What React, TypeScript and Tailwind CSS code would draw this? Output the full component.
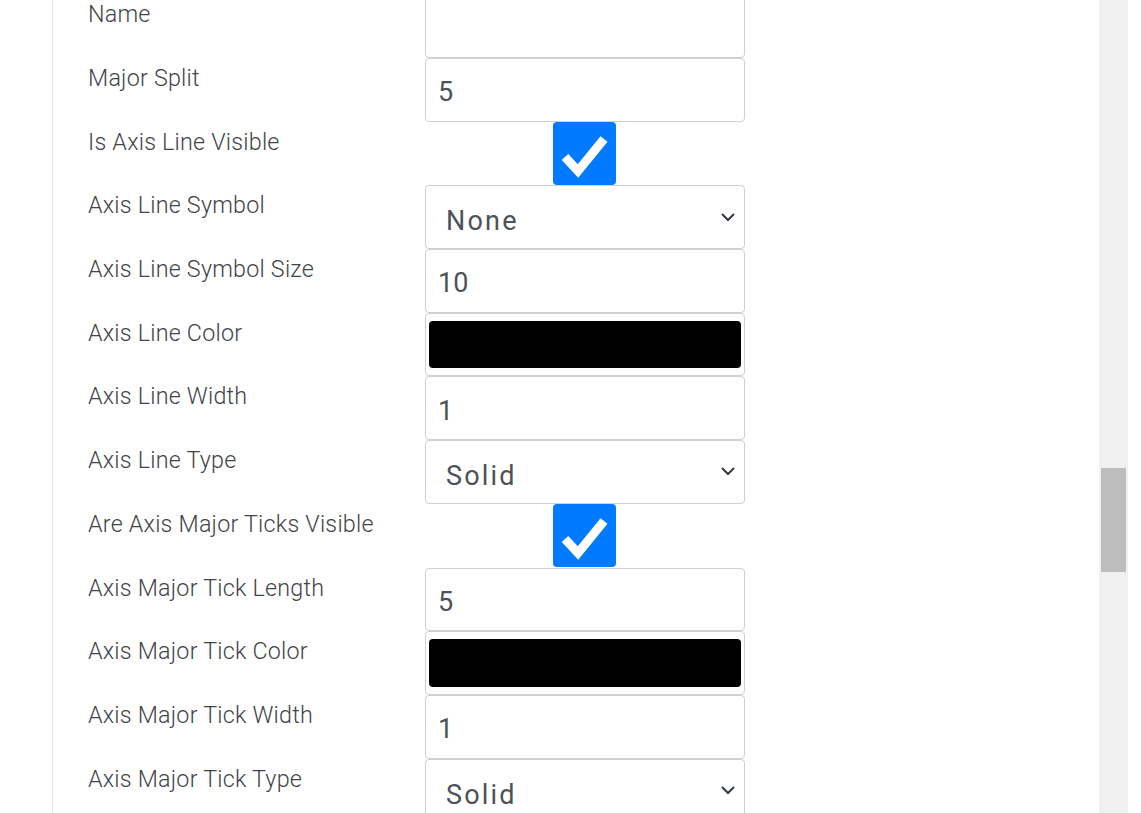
import React from "react";

type Row =
  | { label: string; kind: "text"; value: string }
  | { label: string; kind: "check" }
  | { label: string; kind: "select"; value: string }
  | { label: string; kind: "color" };

const rows: Row[] = [
  { label: "Name", kind: "text", value: "" },
  { label: "Major Split", kind: "text", value: "5" },
  { label: "Is Axis Line Visible", kind: "check" },
  { label: "Axis Line Symbol", kind: "select", value: "None" },
  { label: "Axis Line Symbol Size", kind: "text", value: "10" },
  { label: "Axis Line Color", kind: "color" },
  { label: "Axis Line Width", kind: "text", value: "1" },
  { label: "Axis Line Type", kind: "select", value: "Solid" },
  { label: "Are Axis Major Ticks Visible", kind: "check" },
  { label: "Axis Major Tick Length", kind: "text", value: "5" },
  { label: "Axis Major Tick Color", kind: "color" },
  { label: "Axis Major Tick Width", kind: "text", value: "1" },
  { label: "Axis Major Tick Type", kind: "select", value: "Solid" },
];

function Control({ row }: { row: Row }) {
  if (row.kind === "check") {
    return (
      <div className="flex h-full w-[320px] items-start justify-center pr-[1px]">
        <div className="flex h-[63px] w-[63px] items-center justify-center rounded-[4px] bg-[#007bff]">
          <svg width="63" height="63" viewBox="0 0 63 63">
            <path d="M12 35 L25 49 L51 17" fill="none" stroke="#ffffff" strokeWidth="9" strokeLinejoin="miter" />
          </svg>
        </div>
      </div>
    );
  }
  if (row.kind === "color") {
    return (
      <div className="box-border flex h-full w-[320px] rounded-[4px] border border-[#d0d0d0] bg-white px-[3px] py-[7px]">
        <div className="h-full w-full rounded-[4px] bg-black" />
      </div>
    );
  }
  if (row.kind === "select") {
    return (
      <div className="box-border flex h-full w-[320px] items-center justify-between rounded-[4px] border border-[#d0d0d0] bg-white pl-[20px] pr-[8px]">
        <span className="mt-[9px] text-[27px] tracking-[2.2px] text-[#4d5257]">{row.value}</span>
        <svg width="16" height="10" viewBox="0 0 16 10" className="mb-[1px]">
          <path d="M2 2 L8 8 L14 2" fill="none" stroke="#343a40" strokeWidth="2" />
        </svg>
      </div>
    );
  }
  return (
    <div className="box-border flex h-full w-[320px] items-center rounded-[4px] border border-[#d0d0d0] bg-white pl-[12px]">
      <span className="mt-[5px] text-[27px] text-[#4d5257]">{row.value}</span>
    </div>
  );
}

export default function App() {
  return (
    <div
      className="flex h-[813px] w-[1141px] overflow-hidden bg-white"
      style={{ fontFamily: "Roboto, 'Liberation Sans', sans-serif" }}
    >
      <div className="w-[52px] shrink-0" />
      <div className="flex-1 border-l border-[#e8e8e8] pl-[35px]">
        <div className="mt-[-5.7px] flex flex-col">
          {rows.map((row, i) => (
            <div key={i} className="flex h-[63.7px]">
              <div className="w-[337px] shrink-0 pt-[3px] text-[23.3px] font-light leading-[35px] tracking-[0.22px] text-[#3f4449]">
                {row.label}
              </div>
              <Control row={row} />
            </div>
          ))}
        </div>
      </div>
      <div className="relative h-full w-[29px] shrink-0 bg-[#f0f0f0]">
        <div className="absolute left-[2px] top-[468px] h-[104px] w-[25px] bg-[#bdbdbd]" />
      </div>
      <div className="w-[13px] shrink-0 bg-white" />
    </div>
  );
}
